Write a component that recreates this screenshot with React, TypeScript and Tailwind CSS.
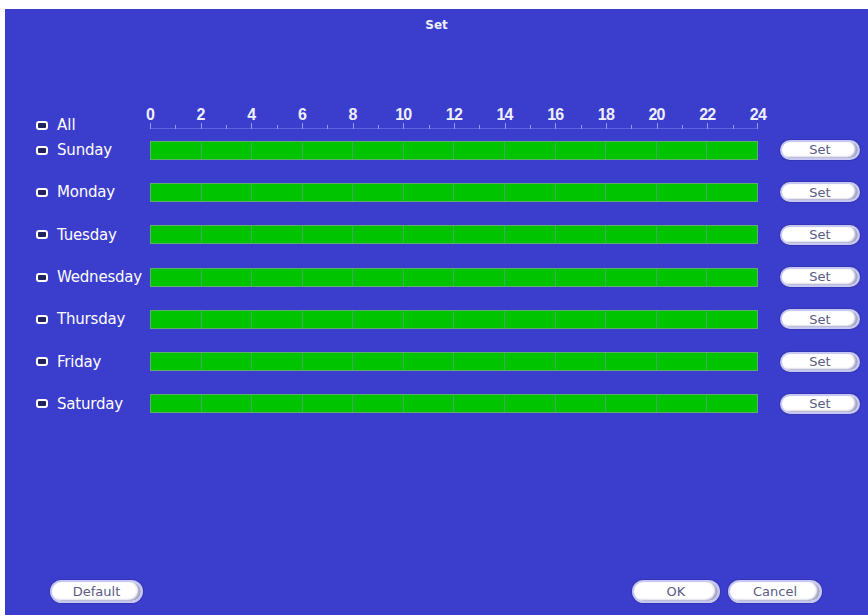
import React from 'react';

const days = ['Sunday', 'Monday', 'Tuesday', 'Wednesday', 'Thursday', 'Friday', 'Saturday'];
const marks = [0, 2, 4, 6, 8, 10, 12, 14, 16, 18, 20, 22, 24];

const CheckBox: React.FC = () => (
  <span className="block h-[9px] w-[12px] shrink-0 rounded-[3px] border-2 border-white bg-[#22245e]" />
);

const PillButton: React.FC<{ label: string; className: string }> = ({ label, className }) => (
  <button
    className={`flex items-center justify-center rounded-full border-2 border-[#c6c7f3] bg-white text-[13px] text-[#5a5b85] shadow-[inset_-3px_-1px_2px_rgba(90,90,150,0.55),0_0_0_1px_rgba(40,40,140,0.35)] ${className}`}
  >
    {label}
  </button>
);

const Ruler: React.FC = () => (
  <div className="flex w-[608px] flex-col">
    <div className="flex h-[16px] justify-between font-['Liberation_Sans',sans-serif] text-[16px] font-bold leading-[16px] text-[#eef0ff]">
      {marks.map((m) => (
        <span key={m} className="flex w-0 justify-center whitespace-nowrap tracking-[-0.8px]">
          {m}
        </span>
      ))}
    </div>
    <svg width="608" height="6" viewBox="0 0 608 6" className="block">
      <line x1="0" y1="5.5" x2="608" y2="5.5" stroke="#5d62de" strokeWidth="1" />
      {Array.from({ length: 25 }).map((_, i) => {
        const x = Math.min(607, Math.round((i * 608) / 24)) + 0.5;
        const top = i % 2 === 0 ? 0 : 2;
        return <line key={i} x1={x} y1={top} x2={x} y2="6" stroke="#9498ee" strokeWidth="1" />;
      })}
    </svg>
  </div>
);

const DayBar: React.FC = () => (
  <div className="flex h-[19px] w-[608px] border border-[#5fae6a] bg-[#00c400]">
    {Array.from({ length: 12 }).map((_, i) => (
      <div key={i} className="flex-1 border-l border-[#45a860] first:border-l-0" />
    ))}
  </div>
);

export default function App() {
  return (
    <div className="h-[615px] w-[868px] bg-white pl-[5px] pt-[9px] font-['DejaVu_Sans',sans-serif]">
      <div className="flex h-[606px] flex-col bg-[#3b3dcc] text-white">
        <div className="mt-[9px] h-[14px] text-center text-[12px] font-bold leading-[14px] text-[#eef0ff]">Set</div>

        {/* header: All + time ruler */}
        <div className="mt-[75px] flex h-[22px] items-end pl-[31px]">
          <div className="-mb-[4px] flex w-[114px] items-center gap-[9px]">
            <CheckBox />
            <span className="text-[15px] leading-[16px]">All</span>
          </div>
          <Ruler />
        </div>

        {/* day rows */}
        <div className="flex flex-col pl-[31px]">
          {days.map((d) => (
            <div key={d} className="flex h-[42.3px] items-center">
              <div className="flex w-[114px] items-center gap-[9px]">
                <CheckBox />
                <span className="whitespace-nowrap text-[15px] leading-[16px] tracking-[-0.2px]">{d}</span>
              </div>
              <DayBar />
              <PillButton label="Set" className="ml-[22px] h-[20px] w-[80px]" />
            </div>
          ))}
        </div>

        <div className="flex-1" />

        {/* bottom buttons */}
        <div className="flex items-center pb-[12px] pl-[45px] pr-[46px]">
          <PillButton label="Default" className="h-[23px] w-[93px]" />
          <div className="flex-1" />
          <PillButton label="OK" className="h-[23px] w-[88px]" />
          <PillButton label="Cancel" className="ml-[8px] h-[23px] w-[94px]" />
        </div>
      </div>
    </div>
  );
}
